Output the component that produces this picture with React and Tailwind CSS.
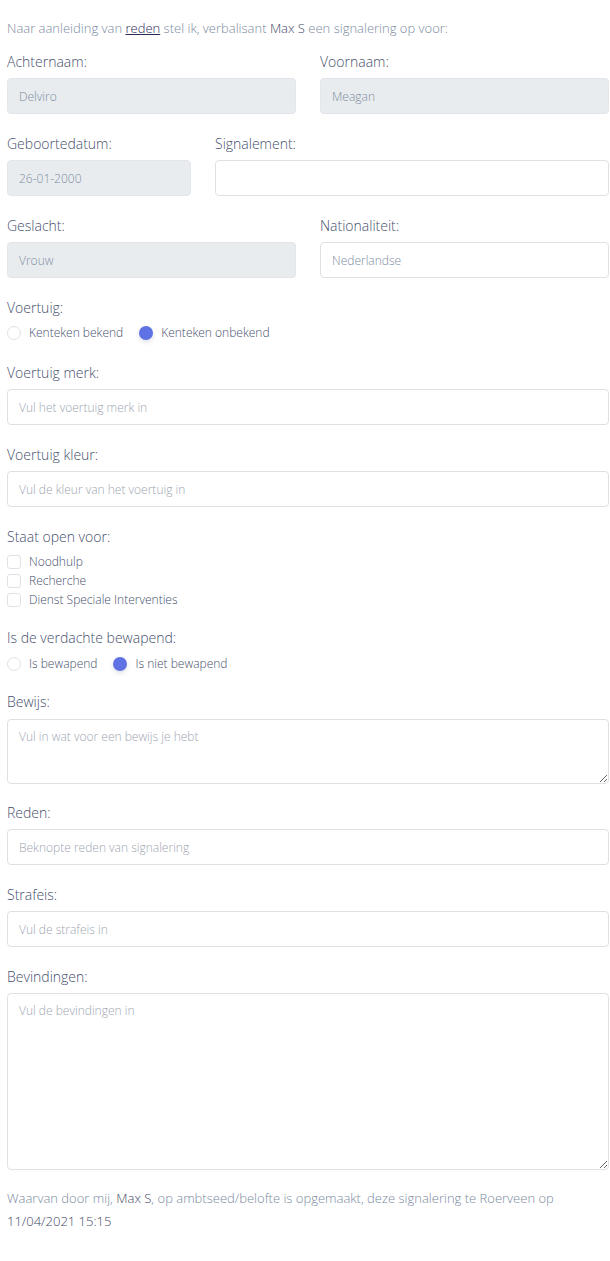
import React from 'react';

const labelCls = "block text-[14px] leading-[21px] text-[#46506d] mb-[6px]";
const inputCls = "block w-full h-[36px] px-[11px] text-[12px] rounded-[4px] border border-[#dee2e6] bg-white text-[#7d8ca0] placeholder:text-[#9ea6b1] focus:outline-none";
const disabledCls = "block w-full h-[36px] px-[11px] text-[12px] rounded-[4px] border border-[#e3e6ea] bg-[#e9ecef] text-[#7d8ca0]";
const areaCls = "block w-full px-[11px] py-[8px] text-[12px] rounded-[4px] border border-[#dee2e6] bg-white text-[#7d8ca0] placeholder:text-[#9ea6b1] focus:outline-none";

function Field({ label, children }) {
    return (
        <div className="mb-[19px]">
            <label className={labelCls}>{label}</label>
            {children}
        </div>
    );
}

function Radio({ label, checked }) {
    return (
        <div className="flex items-center mr-[16px] h-[18px]">
            <span className={`w-[14px] h-[14px] rounded-full shrink-0 ${checked ? 'bg-[#5e72e4] shadow-[0_2px_5px_rgba(50,50,93,0.15)]' : 'bg-white border border-[#dee2e6]'}`} />
            <span className="ml-[8px] text-[12px] leading-[18px] text-[#46506d]">{label}</span>
        </div>
    );
}

function Check({ label }) {
    return (
        <div className="flex items-center h-[19px]">
            <span className="w-[14px] h-[14px] rounded-[3px] bg-white border border-[#dee2e6] shrink-0" />
            <span className="ml-[8px] text-[12px] leading-[18px] text-[#46506d]">{label}</span>
        </div>
    );
}

export default function App() {
    return (
        <div className="min-h-screen bg-white font-light" style={{ fontFamily: '"Open Sans", sans-serif' }}>
            <div className="ml-[7px] w-[602px] pt-[18px] pb-[20px]">
                <p className="text-[13px] leading-[20px] text-[#7b8aa0] mb-[13px]">
                    Naar aanleiding van <span className="underline text-[#2a2a55]">reden</span> stel ik, verbalisant <span className="text-[#3f4966]">Max S</span> een signalering op voor:
                </p>

                <div className="grid grid-cols-2 gap-x-[24px]">
                    <Field label="Achternaam:">
                        <input className={disabledCls} disabled defaultValue="Delviro" />
                    </Field>
                    <Field label="Voornaam:">
                        <input className={disabledCls} disabled defaultValue="Meagan" />
                    </Field>
                </div>

                <div className="grid grid-cols-[184px_1fr] gap-x-[24px]">
                    <Field label="Geboortedatum:">
                        <input className={disabledCls} disabled defaultValue="26-01-2000" />
                    </Field>
                    <Field label="Signalement:">
                        <input className={inputCls} />
                    </Field>
                </div>

                <div className="grid grid-cols-2 gap-x-[24px]">
                    <Field label="Geslacht:">
                        <input className={disabledCls} disabled defaultValue="Vrouw" />
                    </Field>
                    <Field label="Nationaliteit:">
                        <input className={inputCls} defaultValue="Nederlandse" />
                    </Field>
                </div>

                <div className="mb-[20px]">
                    <label className={labelCls}>Voertuig:</label>
                    <div className="flex">
                        <Radio label="Kenteken bekend" />
                        <Radio label="Kenteken onbekend" checked />
                    </div>
                </div>

                <Field label="Voertuig merk:">
                    <input className={inputCls} placeholder="Vul het voertuig merk in" />
                </Field>

                <Field label="Voertuig kleur:">
                    <input className={inputCls} placeholder="Vul de kleur van het voertuig in" />
                </Field>

                <div className="mb-[18px]">
                    <label className="block text-[14px] leading-[21px] text-[#46506d] mb-[5px]">Staat open voor:</label>
                    <Check label="Noodhulp" />
                    <Check label="Recherche" />
                    <Check label="Dienst Speciale Interventies" />
                </div>

                <div className="mb-[18px]">
                    <label className="block text-[14px] leading-[21px] text-[#46506d] mb-[7px]">Is de verdachte bewapend:</label>
                    <div className="flex">
                        <Radio label="Is bewapend" />
                        <Radio label="Is niet bewapend" checked />
                    </div>
                </div>

                <div className="mb-[18px]">
                    <label className="block text-[14px] leading-[21px] text-[#46506d] mb-[7px]">Bewijs:</label>
                    <textarea className={`${areaCls} h-[65px]`} placeholder="Vul in wat voor een bewijs je hebt" />
                </div>

                <Field label="Reden:">
                    <input className={inputCls} placeholder="Beknopte reden van signalering" />
                </Field>

                <Field label="Strafeis:">
                    <input className={inputCls} placeholder="Vul de strafeis in" />
                </Field>

                <div className="mb-[17px]">
                    <label className="block text-[14px] leading-[21px] text-[#46506d] mb-[6px]">Bevindingen:</label>
                    <textarea className={`${areaCls} h-[177px]`} placeholder="Vul de bevindingen in" />
                </div>

                <p className="text-[13px] leading-[23px] text-[#7b8aa0]">
                    Waarvan door mij, <span className="text-[#3f4966]">Max S</span>, op ambtseed/belofte is opgemaakt, deze signalering te Roerveen op <span className="text-[#3f4966]">11/04/2021 15:15</span>
                </p>
            </div>
        </div>
    );
}
